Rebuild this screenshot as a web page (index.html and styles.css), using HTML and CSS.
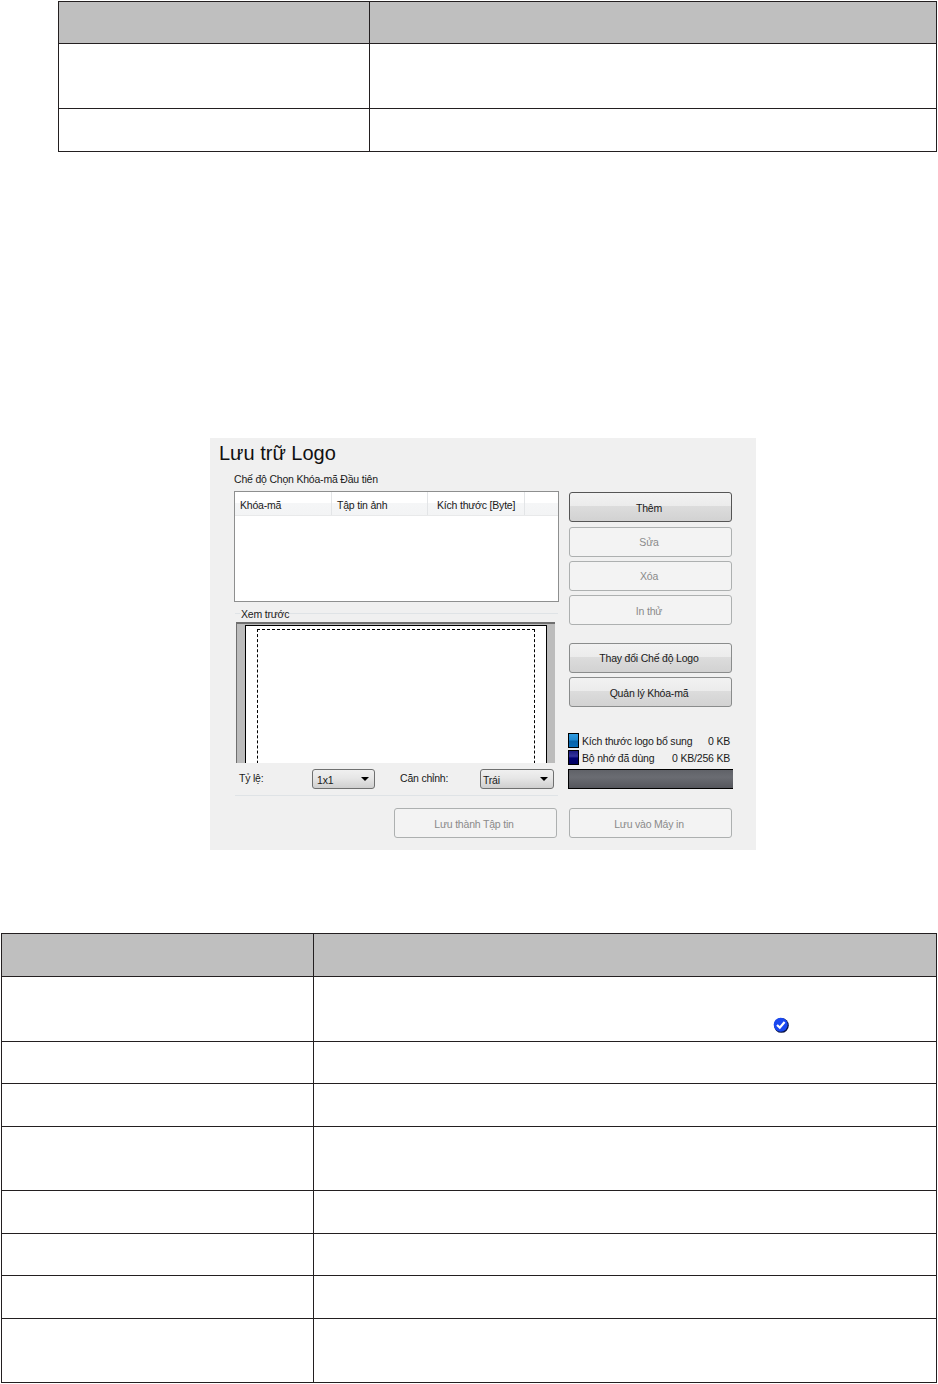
FILE: index.html
```html
<!DOCTYPE html>
<html lang="en">
<head>
    <meta charset="UTF-8">
    <meta name="viewport" content="width=device-width, initial-scale=1.0">
    <title>Lưu trữ Logo</title>
    <link rel="stylesheet" href="styles.css">
</head>
<body>

    <!-- First table -->
    <table class="doc-table table-top">
        <tr class="head-row"><th class="col-a"></th><th></th></tr>
        <tr class="row-tall"><td></td><td></td></tr>
        <tr class="row-short"><td></td><td></td></tr>
    </table>

    <!-- Dialog -->
    <div class="panel">
        <h1 class="panel-title">Lưu trữ Logo</h1>
        <div class="panel-body">
            <div class="left-col">
                <div class="mode-label">Chế độ Chọn Khóa-mã Đầu tiên</div>
                <div class="list-box">
                    <div class="list-head">
                        <div class="list-th th-key">Khóa-mã</div>
                        <div class="list-th th-file">Tập tin ảnh</div>
                        <div class="list-th th-size">Kích thước [Byte]</div>
                    </div>
                </div>
                <fieldset class="preview">
                    <legend>Xem trước</legend>
                    <div class="preview-frame">
                        <div class="sheet">
                            <div class="print-area"></div>
                        </div>
                    </div>
                    <div class="preview-options">
                        <span class="opt-label label-ratio">Tỷ lệ:</span>
                        <div class="select select-ratio">1x1<span class="arrow"></span></div>
                        <span class="opt-label label-align">Căn chỉnh:</span>
                        <div class="select select-align">Trái<span class="arrow"></span></div>
                    </div>
                </fieldset>
            </div>
            <div class="right-col">
                <div class="btn btn-first">Thêm</div>
                <div class="btn btn-off btn-tight">Sửa</div>
                <div class="btn btn-off btn-tight">Xóa</div>
                <div class="btn btn-off">In thử</div>
                <div class="btn btn-mode btn-tight">Thay đổi Chế độ Logo</div>
                <div class="btn">Quản lý Khóa-mã</div>
                <div class="memory">
                    <div class="mem-row">
                        <span class="swatch swatch-logo"></span>
                        <span class="mem-name">Kích thước logo bổ sung</span>
                        <span>0 KB</span>
                    </div>
                    <div class="mem-row">
                        <span class="swatch swatch-used"></span>
                        <span class="mem-name">Bộ nhớ đã dùng</span>
                        <span>0 KB/256 KB</span>
                    </div>
                    <div class="mem-bar"></div>
                </div>
            </div>
        </div>
        <div class="panel-foot">
            <div class="btn btn-off btn-save-file">Lưu thành Tập tin</div>
            <div class="btn btn-off btn-save-printer">Lưu vào Máy in</div>
        </div>
    </div>

    <!-- Second table -->
    <table class="doc-table table-bottom">
        <tr class="head-row"><th class="col-b"></th><th></th></tr>
        <tr class="row-tall">
            <td></td>
            <td class="icon-cell">
                <svg class="check-icon" width="16" height="16" viewBox="0 0 16 16">
                    <circle cx="8.4" cy="8.4" r="7.4" fill="#0a1240"/>
                    <circle cx="7.7" cy="7.7" r="7" fill="#1a48f0"/>
                    <path d="M4 8l2.8 2.6L11.6 5" fill="none" stroke="#fff" stroke-width="2.2"/>
                </svg>
            </td>
        </tr>
        <tr class="row-thin"><td></td><td></td></tr>
        <tr class="row-short"><td></td><td></td></tr>
        <tr class="row-mid"><td></td><td></td></tr>
        <tr class="row-short"><td></td><td></td></tr>
        <tr class="row-thin"><td></td><td></td></tr>
        <tr class="row-short"><td></td><td></td></tr>
        <tr class="row-mid"><td></td><td></td></tr>
    </table>

</body>
</html>
```

FILE: styles.css
```css
body {
    margin: 0;
    padding: 0;
    background-color: #fff;
    font-family: "Liberation Sans", Arial, sans-serif;
    font-size: 10.5px;
    letter-spacing: -0.2px;
    color: #1a1a1a;
}

/* tables */
.doc-table {
    border-collapse: collapse;
    table-layout: fixed;
}

.doc-table th, .doc-table td {
    border: 1px solid #231f20;
    padding: 0;
}

.doc-table th {
    background-color: #bfbfbf;
}

.table-top {
    width: 879px;
    margin: 1px 0 0 58px;
}

.table-bottom {
    width: 936px;
    margin: 83px 0 0 1px;
}

.col-a {
    width: 310px;
}

.col-b {
    width: 311px;
}

.head-row {
    height: 42px;
}

.table-bottom .head-row {
    height: 43px;
}

.row-tall {
    height: 65px;
}

.row-mid {
    height: 64px;
}

.row-short {
    height: 43px;
}

.row-thin {
    height: 42px;
}

.icon-cell {
    text-align: right;
    vertical-align: bottom;
}

.check-icon {
    display: block;
    margin: 0 0 8px 459px;
}

/* dialog */
.panel {
    width: 546px;
    height: 412px;
    margin: 286px 0 0 210px;
    background-color: #f0f0f0;
}

.panel-title {
    margin: 0;
    padding-left: 9px;
    height: 34px;
    line-height: 30px;
    font-size: 20px;
    font-weight: normal;
    letter-spacing: 0;
    color: #111;
}

.panel-body {
    display: flex;
    padding-left: 24px;
}

.left-col {
    width: 325px;
}

.mode-label {
    height: 14px;
    line-height: 14px;
    margin-bottom: 5px;
}

.list-box {
    height: 109px;
    background-color: #fff;
    border: 1px solid #8e8f8f;
}

.list-head {
    display: flex;
    height: 24px;
    background: linear-gradient(#fff 0, #fff 50%, #f5f6f7 50%, #f3f4f5 100%);
    border-bottom: 1px solid #e8e9ea;
    box-sizing: border-box;
}

.list-th {
    box-sizing: border-box;
    line-height: 26px;
    padding-left: 5px;
    border-right: 1px solid #e3e5e7;
}

.th-key {
    width: 97px;
}

.th-file {
    width: 96px;
}

.th-size {
    width: 97px;
    padding-left: 9px;
}

.preview {
    margin: 3px 0 0 1px;
    padding: 0;
    width: 323px;
    min-width: 0;
    box-sizing: border-box;
    border: 0;
    border-top: 1px solid #dfe3e6;
    border-bottom: 1px solid #dfe3e6;
}

.preview legend {
    margin-left: 5px;
    padding: 2px 1px 0;
    line-height: 14px;
}

.preview-frame {
    width: 319px;
    height: 141px;
    margin: 1px 0 0 1px;
    box-sizing: border-box;
    background-color: #bcbcbc;
    border-top: 2px solid #6f6f6f;
    border-left: 1px solid #6f6f6f;
    overflow: hidden;
}

.sheet {
    width: 302px;
    height: 170px;
    margin: 1px 0 0 8px;
    box-sizing: border-box;
    background-color: #fff;
    border: 1px solid #000;
    padding: 3px 0 0 11px;
}

.print-area {
    width: 278px;
    height: 160px;
    box-sizing: border-box;
    border: 1px dashed #000;
}

.preview-options {
    display: flex;
    align-items: center;
    height: 32px;
}

.opt-label {
    line-height: 14px;
    margin-top: -2px;
}

.label-ratio {
    margin-left: 4px;
    width: 73px;
}

.label-align {
    margin-left: 25px;
    width: 80px;
}

.select {
    position: relative;
    box-sizing: border-box;
    height: 20px;
    line-height: 20px;
    padding-left: 4px;
    border: 1px solid #6f7070;
    border-radius: 3px;
    background: linear-gradient(#f0f0f0 0, #e6e6e6 45%, #cfcfcf 100%);
}

.select-ratio {
    width: 63px;
}

.select-align {
    width: 74px;
    padding-left: 2px;
}

.arrow {
    position: absolute;
    right: 5px;
    top: 7px;
    border-left: 4px solid transparent;
    border-right: 4px solid transparent;
    border-top: 4px solid #000;
}

.right-col {
    width: 164px;
    margin-left: 10px;
    padding-top: 20px;
}

.btn {
    box-sizing: border-box;
    width: 163px;
    height: 30px;
    line-height: 30px;
    margin-bottom: 4px;
    padding-right: 3px;
    text-align: center;
    border: 1px solid #8a8c8c;
    border-radius: 3px;
    background: linear-gradient(#f2f2f2 0, #ebebeb 48%, #dcdcdc 48%, #d2d2d2 100%);
}

.btn-first {
    border-color: #555;
    margin-bottom: 5px;
}

.btn-off {
    background: #f3f3f3;
    border-color: #adb0b0;
    color: #8a8a8a;
}

.btn-tight {
    line-height: 28px;
}

.btn-mode {
    margin-top: 18px;
}

.memory {
    margin: 25px 0 0 -1px;
}

.mem-row {
    display: flex;
    align-items: center;
    height: 17px;
    width: 162px;
}

.mem-name {
    flex: 1;
    padding-left: 3px;
}

.swatch {
    width: 11px;
    height: 15px;
    border: 1px solid #000;
    box-sizing: border-box;
}

.swatch-logo {
    background: linear-gradient(#2f9be0 0, #1f88d0 45%, #0a62a8 55%, #0a6cb8 100%);
}

.swatch-used {
    background: linear-gradient(#1a1a80 0, #34349c 40%, #000070 55%, #000060 100%);
}

.mem-bar {
    width: 165px;
    height: 20px;
    margin-top: 3px;
    box-sizing: border-box;
    border-top: 1px solid #000;
    border-bottom: 1px solid #000;
    border-left: 1px solid #000;
    background: linear-gradient(#606268, #6a6c72 40%, #55565c);
}

.panel-foot {
    display: flex;
    gap: 12px;
    padding-left: 184px;
    margin-top: 12px;
}

.panel-foot .btn {
    margin-bottom: 0;
}
```
